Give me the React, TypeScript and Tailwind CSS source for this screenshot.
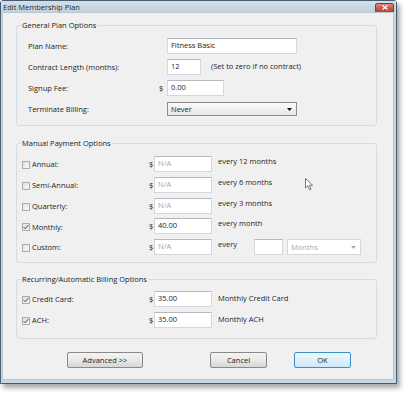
import React from "react";

function Input({ className, value, muted }: { className: string; value?: string; muted?: boolean }) {
  return (
    <div
      className={
        "h-[16px] bg-white border border-[#d3d8de] border-t-[#b4b9c0] pl-[3px] pt-[1px] leading-[11px] " +
        (muted ? "text-[#a8a8a8] " : "text-[#1e1e1e] ") +
        className
      }
    >
      {value}
    </div>
  );
}

function Check({ checked }: { checked?: boolean }) {
  return (
    <span className="w-[8px] h-[8px] shrink-0 border border-[#acacac] bg-gradient-to-br from-[#e2e2e2] to-[#f8f8f8] flex items-center justify-center">
      {checked && (
        <svg width="6" height="6" viewBox="0 0 6 6">
          <path d="M0.5 3 L2.3 4.8 L5.5 0.8" stroke="#4a4a4a" strokeWidth="1" fill="none" />
        </svg>
      )}
    </span>
  );
}

function Group({ title, className, children }: { title: string; className: string; children: React.ReactNode }) {
  return (
    <fieldset className={"border border-[#d5dde3] rounded-[3px] ml-[13px] w-[361px] p-0 m-0 " + className}>
      <legend className="ml-[4px] px-[1px] leading-[10px] text-[#222]">{title}</legend>
      {children}
    </fieldset>
  );
}

function PayRow({
  label,
  checked,
  value,
  muted,
  right,
}: {
  label: string;
  checked?: boolean;
  value: string;
  muted?: boolean;
  right: React.ReactNode;
}) {
  return (
    <div className="flex items-center h-[16px]">
      <div className="w-[125px] flex items-center gap-[2px] pt-[2px]">
        <Check checked={checked} />
        <span>{label}</span>
      </div>
      <span className="w-[7px] pl-[2px] leading-[10px]">$</span>
      <Input className="w-[58px]" value={value} muted={muted} />
      <div className="ml-[6px] self-start leading-[10px] flex items-start">{right}</div>
    </div>
  );
}

function Button({ label, className, def }: { label: string; className: string; def?: boolean }) {
  return (
    <div
      className={
        "h-[16px] rounded-[2px] border flex items-center justify-center leading-[10px] text-[#222] " +
        (def
          ? "border-[#3d8fbf] bg-gradient-to-b from-[#eef8fd] to-[#cde9f7] "
          : "border-[#8a8a8a] bg-gradient-to-b from-[#f4f4f4] via-[#e9e9e9] to-[#d6d6d6] ") +
        className
      }
    >
      {label}
    </div>
  );
}

export default function App() {
  return (
    <div className="w-[407px] h-[394px] bg-white relative font-['Open_Sans','Liberation_Sans',sans-serif] text-[7.5px] text-[#1e1e1e]">
      <div className="w-[397px] h-[384px] border border-[#475d6d] rounded-t-[3px] bg-[#cad7e3] shadow-[3px_4px_5px_rgba(0,0,0,0.35)] flex flex-col">
        {/* title bar */}
        <div className="h-[11px] flex items-center justify-between pl-[2px] pr-[2px] bg-gradient-to-b from-[#d3dfea] to-[#c3d1de]">
          <span className="text-[7.5px] leading-[10px] text-[#1b2a36]">Edit Membership Plan</span>
          <div className="w-[19px] h-[10px] mt-[2px] rounded-[2px] border border-[#8a3a32] bg-gradient-to-b from-[#e08a7c] via-[#cc5a48] to-[#b8412e] flex items-center justify-center">
            <svg width="6" height="5" viewBox="0 0 6 5">
              <path d="M0.5 0.5 L5.5 4.5 M5.5 0.5 L0.5 4.5" stroke="#fff" strokeWidth="1.2" />
            </svg>
          </div>
        </div>
        {/* content */}
        <div className="flex-1 ml-[1px] mr-[2px] mb-[3px] bg-[#f0f0f0] border border-[#b9c7d3] flex flex-col">
          <Group title="General Plan Options" className="mt-[7px] h-[106px]">
            <div className="pt-[8px] pl-[11px] flex flex-col gap-[5px]">
              <div className="flex items-center h-[16px]">
                <span className="w-[131px] pt-[1px]">Plan Name:</span>
                <span className="w-[8px]" />
                <Input className="w-[130px]" value="Fitness Basic" />
              </div>
              <div className="flex items-center h-[16px]">
                <span className="w-[131px] pt-[1px]">Contract Length (months):</span>
                <span className="w-[8px]" />
                <Input className="w-[34px]" value="12" />
                <span className="ml-[10px] self-start leading-[10px] pt-[2px]">(Set to zero if no contract)</span>
              </div>
              <div className="flex items-center h-[16px]">
                <span className="w-[131px] pt-[1px]">Signup Fee:</span>
                <span className="w-[8px] leading-[10px]">$</span>
                <Input className="w-[57px]" value="0.00" />
              </div>
              <div className="flex items-center h-[16px]">
                <span className="w-[131px] pt-[1px]">Terminate Billing:</span>
                <span className="w-[8px]" />
                <div className="w-[130px] h-[14px] border border-[#8d8d8d] bg-gradient-to-b from-[#fbfbfb] to-[#e6e6e6] flex items-center justify-between pl-[3px] pr-[4px]">
                  <span className="leading-[10px] text-[#222]">Never</span>
                  <svg width="5" height="3" viewBox="0 0 5 3">
                    <path d="M0 0 L5 0 L2.5 3 Z" fill="#111" />
                  </svg>
                </div>
              </div>
            </div>
          </Group>

          <Group title="Manual Payment Options" className="mt-[12px] h-[125px]">
            <div className="pt-[8px] pl-[5px] flex flex-col gap-[4.75px]">
              <PayRow label="Annual:" value="N/A" muted right={<span>every 12 months</span>} />
              <PayRow label="Semi-Annual:" value="N/A" muted right={<span>every 6 months</span>} />
              <PayRow label="Quarterly:" value="N/A" muted right={<span>every 3 months</span>} />
              <PayRow label="Monthly:" checked value="40.00" right={<span>every month</span>} />
              <PayRow
                label="Custom:"
                value="N/A"
                muted
                right={
                  <>
                    <span className="w-[36px]">every</span>
                    <div className="w-[29px] h-[16px] bg-white border border-[#d3d8de] border-t-[#b4b9c0]" />
                    <div className="ml-[4px] w-[74px] h-[16px] border border-[#d3d8de] bg-white flex items-center justify-between pl-[3px] pr-[4px]">
                      <span className="text-[#a8a8a8] leading-[10px]">Months</span>
                      <svg width="5" height="3" viewBox="0 0 5 3">
                        <path d="M0 0 L5 0 L2.5 3 Z" fill="#a8a8a8" />
                      </svg>
                    </div>
                  </>
                }
              />
            </div>
          </Group>

          <Group title="Recurring/Automatic Billing Options" className="mt-[11px] h-[65px]">
            <div className="pt-[7px] pl-[5px] flex flex-col gap-[5px]">
              <PayRow label="Credit Card:" checked value="35.00" right={<span className="pt-[2px]">Monthly Credit Card</span>} />
              <PayRow label="ACH:" checked value="35.00" right={<span className="pt-[2px]">Monthly ACH</span>} />
            </div>
          </Group>

          <div className="mt-[13px] flex">
            <Button label="Advanced >>" className="ml-[64px] w-[76px]" />
            <Button label="Cancel" className="ml-[67px] w-[57px]" />
            <Button label="OK" className="ml-[27px] w-[57px]" def />
          </div>
        </div>
      </div>
      {/* mouse cursor */}
      <svg className="absolute left-[305px] top-[178px]" width="9" height="13" viewBox="0 0 9 13">
        <path d="M0.5 0.5 L0.5 10 L2.8 7.8 L4.5 11.8 L6 11.1 L4.4 7.3 L7.6 7.3 Z" fill="#fff" stroke="#555" strokeWidth="0.8" />
      </svg>
    </div>
  );
}
